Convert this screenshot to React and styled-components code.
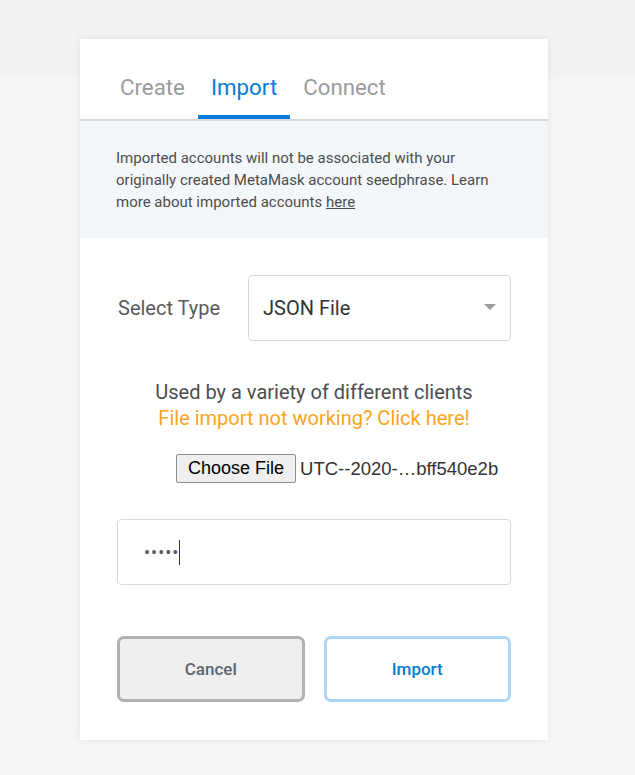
import React from 'react'
import styled, { createGlobalStyle } from 'styled-components'

const GlobalStyle = createGlobalStyle`
    html, body {
        margin: 0;
        padding: 0;
    }
    body {
        min-height: 775px;
        background: linear-gradient(#f2f3f4 0, #f2f3f4 78px, #f7f7f7 78px);
        font-family: Roboto, "Liberation Sans", sans-serif;
    }
`

const Page = styled.div`
    padding: 39px 0 35px 80px;
`

const Card = styled.div`
    width: 468px;
    background: #fff;
    box-shadow: 0 0 8px rgba(0, 0, 0, 0.08);
    display: flex;
    flex-direction: column;
`

const TabList = styled.div`
    display: flex;
    padding-left: 27px;
    border-bottom: 2px solid #d6d9dc;
`

const Tab = styled.div`
    padding: 35px 13px 15px;
    font-size: 22.3px;
    line-height: 26px;
    color: ${p => (p.$active ? '#037dd6' : '#9b9b9b')};
    border-bottom: 4px solid ${p => (p.$active ? '#037dd6' : 'transparent')};
`

const Notice = styled.div`
    background: #f4f7fa;
    padding: 26px 36px 25px;
    font-size: 15px;
    line-height: 22px;
    color: #4d4d4d;

    a {
        color: inherit;
        text-decoration: underline;
    }
`

const Body = styled.div`
    display: flex;
    flex-direction: column;
    padding: 37px 37px 38px;
`

const TypeRow = styled.div`
    display: flex;
    align-items: center;
`

const Label = styled.div`
    width: 131px;
    font-size: 20px;
    color: #5a5a5a;
    padding-left: 1px;
    box-sizing: border-box;
`

const SelectBox = styled.div`
    flex: 1;
    height: 66px;
    box-sizing: border-box;
    border: 1px solid #d6d9dc;
    border-radius: 4px;
    display: flex;
    align-items: center;
    justify-content: space-between;
    padding: 0 14px 0 14px;
    font-size: 20px;
    color: #333;
`

const Caret = styled.svg`
    width: 12px;
    height: 6px;
    margin-top: -2px;
`

const Description = styled.div`
    margin-top: 38px;
    text-align: center;
    font-size: 20px;
    line-height: 26px;
    color: #4d4d4d;
`

const HelpLink = styled.div`
    color: #f8a51c;
`

const FileRow = styled.div`
    margin-top: 23px;
    padding-left: 59px;
    display: flex;
    align-items: center;
    font-family: "Liberation Sans", Arial, sans-serif;
    font-size: 18px;
`

const FileButton = styled.div`
    height: 29px;
    box-sizing: border-box;
    padding: 0 11px;
    display: flex;
    align-items: center;
    background: #efefef;
    border: 1px solid #8f8f8f;
    border-radius: 2px;
    color: #000;
`

const FileName = styled.span`
    margin-left: 4px;
    font-size: 18.5px;
    color: #333;
`

const PasswordField = styled.div`
    margin-top: 36px;
    height: 66px;
    box-sizing: border-box;
    border: 1px solid #d6d9dc;
    border-radius: 4px;
    display: flex;
    align-items: center;
    padding-left: 26px;
    font-size: 18px;
    color: #5a5a5a;
    letter-spacing: 1px;
`

const TextCaret = styled.span`
    width: 1px;
    height: 25px;
    background: #333;
`

const Actions = styled.div`
    margin-top: 51px;
    display: grid;
    grid-template-columns: 1fr 1fr;
    gap: 19px;
`

const Button = styled.button`
    height: 66px;
    border-radius: 7px;
    border: 3px solid ${p => (p.$primary ? '#add6f4' : '#b1b1b1')};
    background: ${p => (p.$primary ? '#fff' : '#efefef')};
    color: ${p => (p.$primary ? '#037dd6' : '#5b6470')};
    font-family: Roboto, sans-serif;
    font-size: 17px;
    font-weight: 500;
    cursor: pointer;
`

export default function App() {
    return (
        <>
            <GlobalStyle />
            <Page>
                <Card>
                    <TabList>
                        <Tab>Create</Tab>
                        <Tab $active>Import</Tab>
                        <Tab>Connect</Tab>
                    </TabList>
                    <Notice>
                        Imported accounts will not be associated with your originally created MetaMask account seedphrase. Learn more about imported accounts <a href="#">here</a>
                    </Notice>
                    <Body>
                        <TypeRow>
                            <Label>Select Type</Label>
                            <SelectBox>
                                <span>JSON File</span>
                                <Caret viewBox="0 0 12 6">
                                    <polygon points="0,0 12,0 6,6" fill="#9b9b9b" />
                                </Caret>
                            </SelectBox>
                        </TypeRow>
                        <Description>
                            <div>Used by a variety of different clients</div>
                            <HelpLink>File import not working? Click here!</HelpLink>
                        </Description>
                        <FileRow>
                            <FileButton>Choose File</FileButton>
                            <FileName>UTC--2020-…bff540e2b</FileName>
                        </FileRow>
                        <PasswordField>
                            <span>•••••</span>
                            <TextCaret />
                        </PasswordField>
                        <Actions>
                            <Button>Cancel</Button>
                            <Button $primary>Import</Button>
                        </Actions>
                    </Body>
                </Card>
            </Page>
        </>
    )
}
